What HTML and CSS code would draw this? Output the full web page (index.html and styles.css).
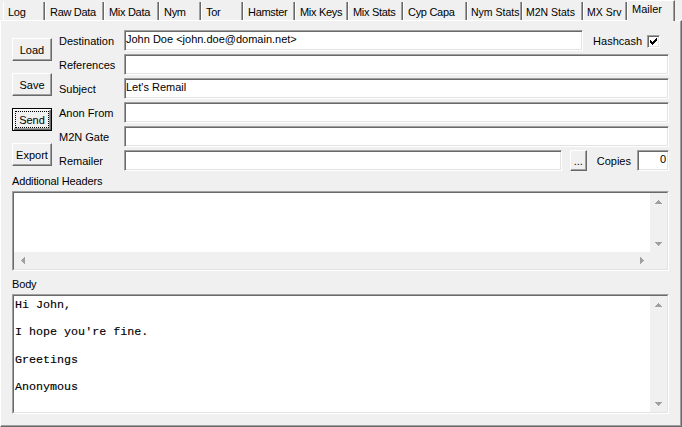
FILE: index.html
```html
<!DOCTYPE html>
<html>
<head>
<meta charset="utf-8">
<title>Mailer</title>
<link rel="stylesheet" href="styles.css">
</head>
<body>
<div class="window">
  <div class="tabs">
    <div class="tab">Log</div>
    <div class="tab">Raw Data</div>
    <div class="tab">Mix Data</div>
    <div class="tab">Nym</div>
    <div class="tab">Tor</div>
    <div class="tab">Hamster</div>
    <div class="tab">Mix Keys</div>
    <div class="tab">Mix Stats</div>
    <div class="tab">Cyp Capa</div>
    <div class="tab tight">Nym Stats</div>
    <div class="tab tight">M2N Stats</div>
    <div class="tab tight">MX Srv</div>
    <div class="tab active">Mailer</div>
  </div>
  <div class="panel">
    <div class="top">
      <div class="actions">
        <div class="btn">Load</div>
        <div class="btn">Save</div>
        <div class="btn default"><span class="focus">Send</span></div>
        <div class="btn">Export</div>
      </div>
      <div class="form">
        <div class="lbl">Destination</div>
        <div class="field">
          <div class="edit">John Doe &lt;john.doe@domain.net&gt;</div>
          <span class="hash-lbl">Hashcash</span>
          <span class="check"><svg width="7" height="7" viewBox="0 0 7 7" shape-rendering="crispEdges"><path d="M6 0h1v3h-1v1h-1v1h-1v1h-1v1h-1v-1h-1v-1h-1v-3h1v1h1v1h1v-1h1v-1h1z" fill="#000"/></svg></span>
        </div>
        <div class="lbl">References</div>
        <div class="field"><div class="edit"></div></div>
        <div class="lbl">Subject</div>
        <div class="field"><div class="edit">Let's Remail</div></div>
        <div class="lbl">Anon From</div>
        <div class="field"><div class="edit"></div></div>
        <div class="lbl">M2N Gate</div>
        <div class="field"><div class="edit"></div></div>
        <div class="lbl">Remailer</div>
        <div class="field">
          <div class="edit"></div>
          <div class="btn dots">...</div>
          <span class="copies-lbl">Copies</span>
          <div class="edit copies">0</div>
        </div>
      </div>
    </div>

    <div class="section">Additional Headers</div>
    <div class="memo headers">
      <div class="memo-in">
        <div class="memo-text"></div>
        <div class="vscroll">
          <div class="sb-btn"><svg width="7" height="4" viewBox="0 0 7 4" shape-rendering="crispEdges"><path d="M3 0h1v1h1v1h1v1h1v1H0V3h1V2h1V1h1z" fill="#a0a0a0"/></svg></div>
          <div class="sb-btn"><svg width="7" height="4" viewBox="0 0 7 4" shape-rendering="crispEdges"><path d="M0 0h7v1h-1v1h-1v1h-1v1h-1v-1h-1v-1h-1v-1h-1z" fill="#a0a0a0"/></svg></div>
        </div>
        <div class="hscroll">
          <div class="sb-btn"><svg width="4" height="7" viewBox="0 0 4 7" shape-rendering="crispEdges"><path d="M3 0h1v7h-1v-1h-1v-1h-1v-1h-1v-1h1v-1h1v-1h1z" fill="#a0a0a0"/></svg></div>
          <div class="sb-btn"><svg width="4" height="7" viewBox="0 0 4 7" shape-rendering="crispEdges"><path d="M0 0h1v1h1v1h1v1h1v1h-1v1h-1v1h-1v1h-1z" fill="#a0a0a0"/></svg></div>
        </div>
        <div class="corner"></div>
      </div>
    </div>

    <div class="section body-lbl">Body</div>
    <div class="memo body-memo">
      <div class="memo-in">
<pre class="memo-text mono">Hi John,

I hope you're fine.

Greetings

Anonymous</pre>
        <div class="vscroll">
          <div class="sb-btn"><svg width="7" height="4" viewBox="0 0 7 4" shape-rendering="crispEdges"><path d="M3 0h1v1h1v1h1v1h1v1H0V3h1V2h1V1h1z" fill="#a0a0a0"/></svg></div>
          <div class="sb-btn"><svg width="7" height="4" viewBox="0 0 7 4" shape-rendering="crispEdges"><path d="M0 0h7v1h-1v1h-1v1h-1v1h-1v-1h-1v-1h-1v-1h-1z" fill="#a0a0a0"/></svg></div>
        </div>
      </div>
    </div>
  </div>
</div>
</body>
</html>
```

FILE: styles.css
```css
html, body {
  margin: 0;
  padding: 0;
}

body {
  background: #f0f0f0;
  font-family: "Liberation Sans", Arial, sans-serif;
  font-size: 11px;
  color: #000;
}

.window {
  width: 682px;
  height: 427px;
  overflow: hidden;
}

/* ---------- tab strip ---------- */
.tabs {
  display: flex;
  align-items: flex-end;
  height: 20px;
  padding-left: 3px;
}

.tab {
  flex: none;
  box-sizing: border-box;
  height: 18px;
  border-left: 1px solid #fff;
  border-right: 1px solid #696969;
  box-shadow: inset -1px 0 #a0a0a0;
  padding: 3px 0 0 4px;
  line-height: 14px;
  letter-spacing: -0.3px;
  white-space: nowrap;
  overflow: hidden;
}

.tab.tight {
  padding-left: 3px;
  font-size: 10.5px;
  letter-spacing: 0;
}

.tab:nth-child(1)  { width: 42px; }
.tab:nth-child(2)  { width: 59px; }
.tab:nth-child(3)  { width: 55px; }
.tab:nth-child(4)  { width: 42px; }
.tab:nth-child(5)  { width: 42px; }
.tab:nth-child(6)  { width: 52px; }
.tab:nth-child(7)  { width: 53px; }
.tab:nth-child(8)  { width: 55px; }
.tab:nth-child(9)  { width: 64px; }
.tab:nth-child(10) { width: 55px; }
.tab:nth-child(11) { width: 61px; }
.tab:nth-child(12) { width: 44px; }
.tab:nth-child(13) { width: 48px; }

.tab.active {
  position: relative;
  z-index: 1;
  height: 21px;
  margin-bottom: -1px;
  border-top: 1px solid #fff;
  padding-top: 1px;
  background: #f0f0f0;
  letter-spacing: 0;
}

/* ---------- panel ---------- */
.panel {
  box-sizing: border-box;
  height: 407px;
  border: 1px solid;
  border-color: #fff #696969 #696969 #fff;
  box-shadow: inset -1px -1px #a0a0a0;
  padding: 9px 12px 0 11px;
}

.top {
  display: flex;
}

.actions {
  flex: none;
  width: 40px;
  margin-right: 7px;
  padding-top: 8px;
  display: flex;
  flex-direction: column;
  gap: 12px;
}

.btn {
  box-sizing: border-box;
  height: 23px;
  border: 1px solid;
  border-color: #fff #696969 #696969 #fff;
  box-shadow: inset -1px -1px #a0a0a0;
  display: flex;
  align-items: center;
  justify-content: center;
  line-height: 14px;
  white-space: nowrap;
}

.btn.default {
  border-color: #000;
  box-shadow: inset 1px 1px #fff, inset -1px -1px #696969, inset -2px -2px #a0a0a0;
  padding: 2px;
  align-items: stretch;
}

.focus {
  flex: 1;
  border: 1px dotted #000;
  display: flex;
  align-items: center;
  justify-content: center;
}

.form {
  flex: 1;
  display: grid;
  grid-template-columns: 65px 1fr;
  grid-auto-rows: 21px;
  row-gap: 3px;
  align-items: center;
}

.lbl {
  line-height: 14px;
  white-space: nowrap;
}

.field {
  display: flex;
  align-items: center;
  height: 21px;
}

.edit {
  flex: 1;
  box-sizing: border-box;
  height: 21px;
  border: 1px solid;
  border-color: #a0a0a0 #fff #fff #a0a0a0;
  box-shadow: inset 1px 1px #696969, inset -1px -1px #e3e3e3;
  background: #fff;
  padding: 0 2px 0 1px;
  line-height: 17px;
  white-space: nowrap;
  overflow: hidden;
}

.hash-lbl {
  margin-left: 10px;
  line-height: 14px;
}

.check {
  box-sizing: border-box;
  width: 13px;
  height: 13px;
  margin: 2px 9px 0 5px;
  border: 1px solid;
  border-color: #a0a0a0 #fff #fff #a0a0a0;
  box-shadow: inset 1px 1px #696969, inset -1px -1px #e3e3e3;
  background: #fff;
  display: flex;
  align-items: center;
  justify-content: center;
}

.btn.dots {
  flex: none;
  width: 17px;
  height: 21px;
  margin-left: 8px;
}

.copies-lbl {
  margin-left: 10px;
  line-height: 14px;
}

.edit.copies {
  flex: none;
  width: 32px;
  margin-left: 6px;
  text-align: right;
  padding-right: 2px;
}

/* ---------- memos ---------- */
.section {
  line-height: 14px;
  margin: 3px 0 3px;
  letter-spacing: -0.15px;
}

.section.body-lbl {
  margin-top: 6px;
}

.memo {
  box-sizing: border-box;
  border: 1px solid;
  border-color: #a0a0a0 #fff #fff #a0a0a0;
}

.memo.headers {
  height: 80px;
}

.memo.body-memo {
  height: 120px;
}

.memo-in {
  box-sizing: border-box;
  height: 100%;
  border: 1px solid;
  border-color: #696969 #e3e3e3 #e3e3e3 #696969;
  background: #fff;
  display: grid;
  grid-template-columns: 1fr 17px;
}

.headers .memo-in {
  grid-template-rows: 1fr 17px;
}

.memo-text {
  margin: 0;
  background: #fff;
}

.mono {
  font-family: "Liberation Mono", "Courier New", monospace;
  font-size: 11.7px;
  line-height: 13.7px;
  padding: 3px 0 0 1px;
  color: #000;
  -webkit-text-stroke: 0.15px #000;
}

.vscroll {
  background: #f0f0f0;
  display: flex;
  flex-direction: column;
  justify-content: space-between;
}

.hscroll {
  background: #f0f0f0;
  display: flex;
  justify-content: space-between;
}

.corner {
  background: #f0f0f0;
}

.sb-btn {
  width: 17px;
  height: 17px;
  display: flex;
  align-items: center;
  justify-content: center;
}
```
